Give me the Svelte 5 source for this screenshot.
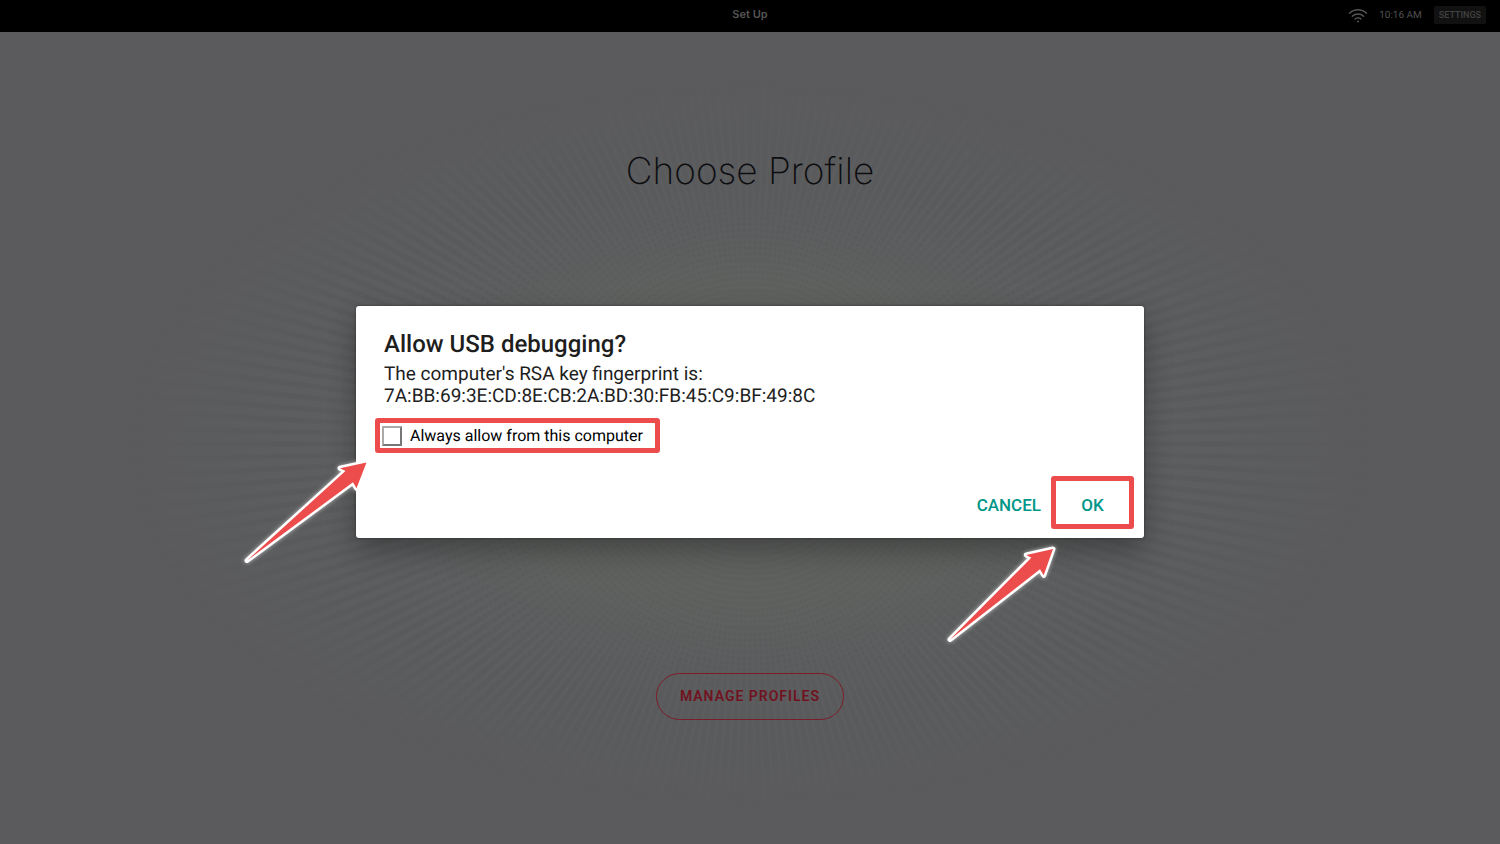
<script>
  const count = 240;
  const rays = Array.from({ length: count }, (_, i) => {
    const a = (i / count) * Math.PI * 2;
    const x = Math.cos(a);
    const y = Math.sin(a);
    return { x1: 100 * x, y1: 100 * y, x2: 620 * x, y2: 620 * y };
  });
  let always = $state(false);
</script>

<div class="screen">
  <header>
    <span></span>
    <span class="title">Set Up</span>
    <div class="status">
      <svg class="wifi" viewBox="0 0 20 15" width="20" height="15" aria-hidden="true">
        <path d="M1.5 5.2C6.3 .6 13.7 .6 18.5 5.2M4.3 8.2c3.2-3 8.2-3 11.4 0M7.1 11c1.6-1.5 4.2-1.5 5.8 0" />
        <circle cx="10" cy="13.4" r="1" />
      </svg>
      <span class="time">10:16 AM</span>
      <button class="settings">SETTINGS</button>
    </div>
  </header>

  <main>
    <svg class="burst" viewBox="-750 -412 1500 812" preserveAspectRatio="xMidYMid slice" aria-hidden="true">
      <defs>
        <radialGradient id="glow">
          <stop offset="0" stop-color="#616361" />
          <stop offset=".45" stop-color="#5f615f" />
          <stop offset=".62" stop-color="#5d5f60" />
          <stop offset="1" stop-color="#5b5b5d" />
        </radialGradient>
        <radialGradient id="inner">
          <stop offset="0" stop-color="#fff" stop-opacity=".15" />
          <stop offset=".4" stop-color="#fff" stop-opacity=".25" />
          <stop offset=".6" stop-color="#fff" stop-opacity=".5" />
          <stop offset=".85" stop-color="#fff" stop-opacity="0" />
        </radialGradient>
        <radialGradient id="outer">
          <stop offset=".5" stop-color="#fff" stop-opacity="0" />
          <stop offset=".75" stop-color="#fff" stop-opacity=".65" />
          <stop offset="1" stop-color="#fff" stop-opacity="0" />
        </radialGradient>
        <mask id="inner-oval" maskUnits="userSpaceOnUse" x="-750" y="-420" width="1500" height="840">
          <ellipse rx="620" ry="360" fill="url(#inner)" />
        </mask>
        <mask id="outer-oval" maskUnits="userSpaceOnUse" x="-750" y="-420" width="1500" height="840">
          <ellipse rx="620" ry="360" fill="url(#outer)" />
        </mask>
      </defs>
      <ellipse rx="620" ry="360" fill="url(#glow)" />
      <g mask="url(#inner-oval)">
        {#each rays as r}
          <line class="dots" x1={r.x1} y1={r.y1} x2={r.x2} y2={r.y2} />
        {/each}
      </g>
      <g mask="url(#outer-oval)">
        {#each rays as r}
          <line class="ray" x1={r.x1} y1={r.y1} x2={r.x2} y2={r.y2} />
        {/each}
      </g>
    </svg>
    <h1>Choose Profile</h1>
    <button class="manage">MANAGE PROFILES</button>
  </main>

  <div class="overlay">
    <div class="dialog" role="dialog" aria-labelledby="dlg-title">
      <h2 id="dlg-title">Allow USB debugging?</h2>
      <p>The computer's RSA key fingerprint is:<br />7A:BB:69:3E:CD:8E:CB:2A:BD:30:FB:45:C9:BF:49:8C</p>
      <label class="always marked">
        <input type="checkbox" bind:checked={always} />
        Always allow from this computer
      </label>
      <div class="actions">
        <button>CANCEL</button>
        <button class="ok marked">OK</button>
      </div>
      <svg class="arrow first" viewBox="0 0 130 110" width="130" height="110" aria-hidden="true">
        <path class="edge" d="M124.5 6.5 98 12.3l5.5 2.7L5 104.5l106-78.2 3.5 6z" />
        <path class="body" d="M124.5 6.5 98 12.3l5.5 2.7L5 104.5l106-78.2 3.5 6z" />
      </svg>
      <svg class="arrow second" viewBox="0 0 116 104" width="116" height="104" aria-hidden="true">
        <path class="edge" d="M109 7 82.3 13l5 2.7L6 97.5l90-70.2 3.7 6z" />
        <path class="body" d="M109 7 82.3 13l5 2.7L6 97.5l90-70.2 3.7 6z" />
      </svg>
    </div>
  </div>
</div>

<style>
  :global(body) {
    margin: 0;
    background: #5b5b5d;
  }
  .screen {
    position: relative;
    min-height: 100vh;
    display: flex;
    flex-direction: column;
    overflow: hidden;
    font-family: Roboto, sans-serif;
    text-rendering: geometricPrecision;
  }
  button {
    font: inherit;
    border: 0;
    background: none;
    padding: 0;
    cursor: pointer;
  }
  header {
    display: grid;
    grid-template-columns: 1fr auto 1fr;
    align-items: center;
    box-sizing: border-box;
    height: 32px;
    padding: 0 14px 2px;
    background: #000;
    color: #505050;
    font-size: 10px;
  }
  .title {
    font-family: Inter, sans-serif;
    font-size: 11px;
    font-weight: 600;
    line-height: 14px;
    padding-bottom: 2px;
    color: #555;
  }
  .status {
    display: flex;
    justify-content: flex-end;
    align-items: center;
  }
  .wifi {
    margin-right: 11px;
    fill: none;
    stroke: #555;
    stroke-width: 1.4;
    stroke-linecap: round;
  }
  .wifi circle {
    fill: #555;
    stroke: none;
  }
  .time {
    margin-right: 12px;
  }
  .settings {
    height: 18px;
    padding: 0 5px;
    border-radius: 2px;
    background: #111;
    color: #424242;
    font-size: 9px;
    font-weight: 500;
  }
  main {
    position: relative;
    flex: 1;
    display: flex;
    flex-direction: column;
    align-items: center;
    justify-content: space-between;
    padding: 115px 0 124px;
  }
  .burst {
    position: absolute;
    inset: 0;
    width: 100%;
    height: 100%;
  }
  .dots {
    stroke: #57585a;
    stroke-width: 3;
    stroke-linecap: round;
    stroke-dasharray: 0 6;
  }
  .ray {
    stroke: #59595b;
    stroke-width: 5;
  }
  h1 {
    position: relative;
    margin: 0;
    font-family: Inter, sans-serif;
    font-weight: 200;
    font-size: 37px;
    line-height: 48px;
    color: #0c0d0f;
  }
  .manage {
    position: relative;
    box-sizing: border-box;
    height: 47px;
    padding: 0 23px 2px;
    border: 1px solid #7c1c28;
    border-radius: 24px;
    font-size: 14px;
    font-weight: 600;
    letter-spacing: 1px;
    color: #71121f;
  }
  .overlay {
    position: absolute;
    inset: 0;
    display: flex;
    align-items: center;
    justify-content: center;
  }
  .dialog {
    position: relative;
    box-sizing: border-box;
    width: 788px;
    max-width: 94%;
    padding: 24px 10px 9px 28px;
    border-radius: 3px;
    background: #fff;
    color: #1e1e1e;
    box-shadow: 0 12px 28px rgba(0, 0, 0, 0.3), 0 0 3px rgba(0, 0, 0, 0.4);
  }
  h2 {
    margin: 0 0 5px;
    font-size: 24px;
    font-weight: 500;
    line-height: 28px;
  }
  p {
    margin: 0;
    font-size: 19px;
    line-height: 22px;
  }
  .marked {
    border: 5px solid #ec4c4b;
    border-radius: 3px;
  }
  .always {
    display: inline-flex;
    align-items: center;
    gap: 8px;
    box-sizing: border-box;
    height: 35px;
    margin: 11px 0 0 -9px;
    padding: 0 12px 0 2px;
    font-size: 16px;
    color: #000;
  }
  .always input {
    appearance: none;
    box-sizing: border-box;
    width: 20px;
    height: 20px;
    margin: 0;
    border: 2px solid;
    border-color: #aaa #777 #777 #aaa;
    border-radius: 1px;
    background: #fff;
  }
  .always input:checked {
    background: #009688;
  }
  .actions {
    display: flex;
    justify-content: flex-end;
    gap: 10px;
    margin-top: 23px;
    font-size: 17px;
    font-weight: 500;
  }
  .actions button {
    color: #009688;
    padding-top: 5px;
  }
  .actions .ok {
    box-sizing: border-box;
    width: 83px;
    height: 53px;
  }
  .arrow {
    position: absolute;
    overflow: visible;
    pointer-events: none;
    filter: drop-shadow(0 0 2px rgba(255, 255, 255, 0.6));
  }
  .first {
    left: -114px;
    top: 150px;
  }
  .second {
    right: 84px;
    top: 236px;
  }
  .edge {
    fill: #fff;
    stroke: #fff;
    stroke-width: 5;
    stroke-linejoin: round;
  }
  .body {
    fill: #ec4c4b;
  }
</style>
